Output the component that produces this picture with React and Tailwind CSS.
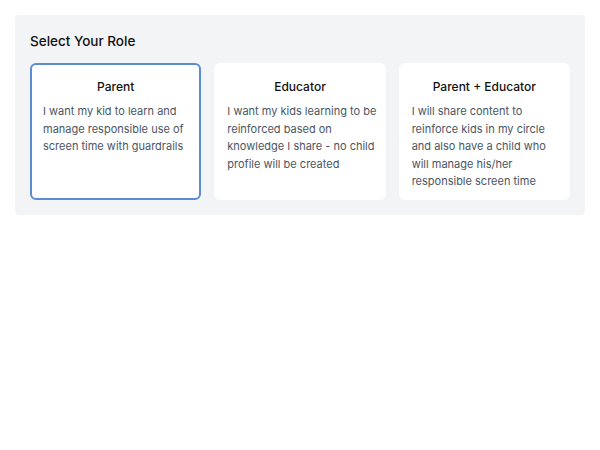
import React from "react";

const roles = [
  {
    title: "Parent",
    lines: [
      "I want my kid to learn and",
      "manage responsible use of",
      "screen time with guardrails",
    ],
    selected: true,
  },
  {
    title: "Educator",
    lines: [
      "I want my kids learning to be",
      "reinforced based on",
      "knowledge I share - no child",
      "profile will be created",
    ],
  },
  {
    title: "Parent + Educator",
    lines: [
      "I will share content to",
      "reinforce kids in my circle",
      "and also have a child who",
      "will manage his/her",
      "responsible screen time",
    ],
  },
];

export default function App() {
  return (
    <div className="min-h-[450px] bg-white p-[15px] font-['Inter',sans-serif]">
      <div className="rounded-sm bg-[#f3f4f6] p-[15px]">
        <h2 className="mb-[12px] pt-px text-[13.5px] font-medium leading-5 text-[#111]">
          Select Your Role
        </h2>
        <div className="grid grid-cols-3 gap-[13px]">
          {roles.map((r) => (
            <div
              key={r.title}
              className={
                r.selected
                  ? "h-[137px] rounded-md border-2 border-[#5b8bd4] bg-white px-[11px] pt-[12px]"
                  : "h-[137px] rounded-md border-2 border-white bg-white px-[11px] pt-[12px]"
              }
            >
              <div className="mb-[6px] text-center text-[12px] font-medium leading-5 text-[#111]">
                {r.title}
              </div>
              <p className="text-[11px] leading-[17.5px] text-[#4b5563]">
                {r.lines.map((l) => (
                  <span key={l} className="block whitespace-nowrap">
                    {l}
                  </span>
                ))}
              </p>
            </div>
          ))}
        </div>
      </div>
    </div>
  );
}
